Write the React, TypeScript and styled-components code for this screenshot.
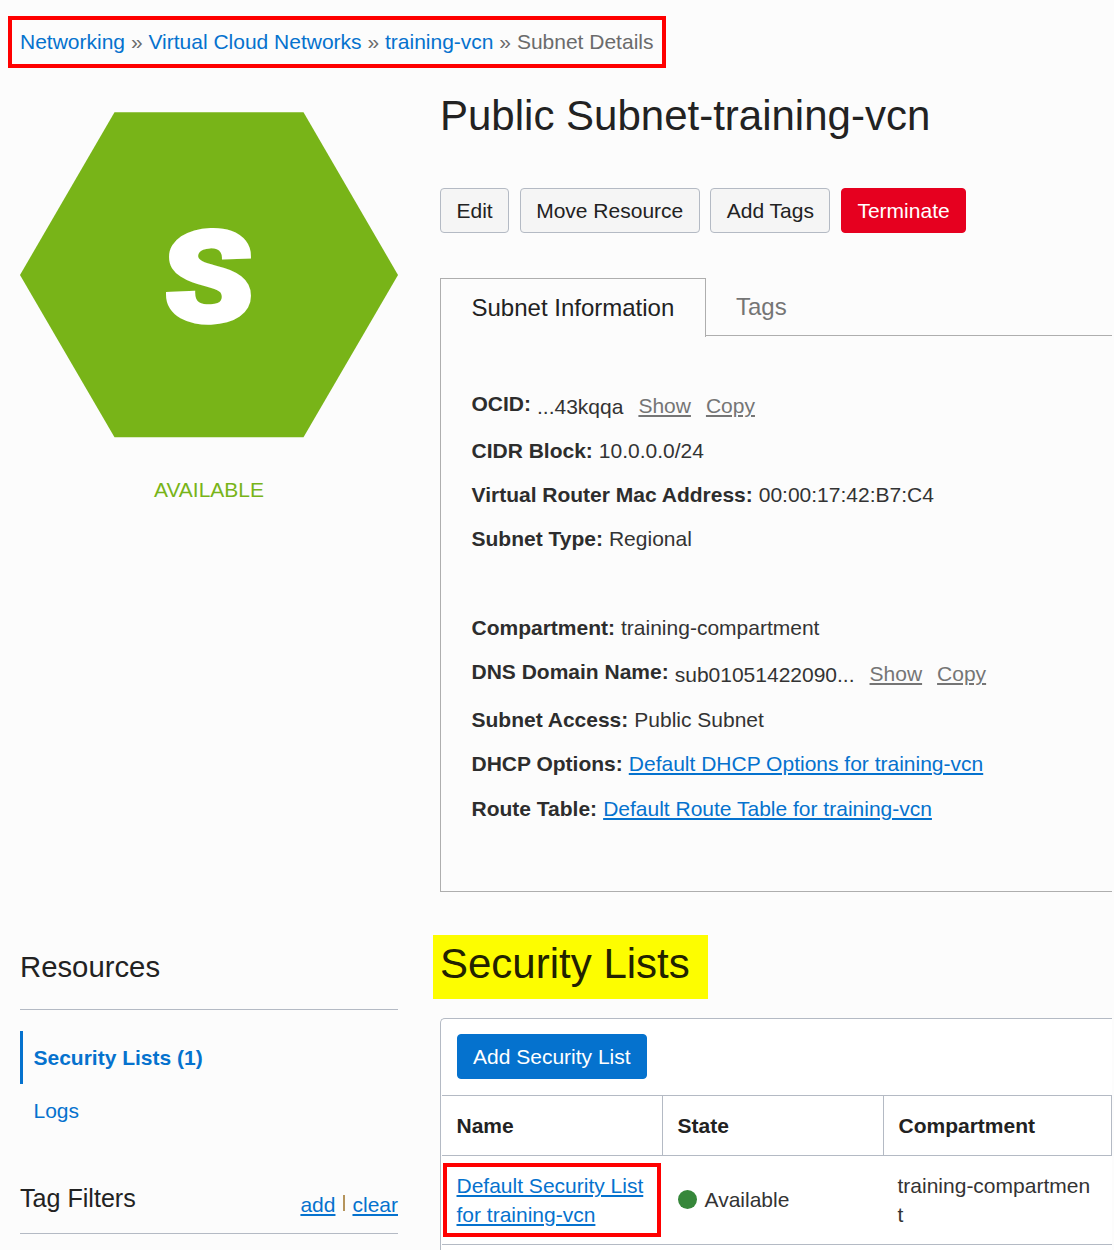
import React from "react";
import styled, { createGlobalStyle, css } from "styled-components";

const blue = "#0572ce";
const red = "#e6001f";
const line = "#b4bac4";
const tabLine = "#aeaeae";

const Global = createGlobalStyle`
  * { box-sizing: border-box; }
  html, body { margin: 0; padding: 0; background: #fcfcfc; }
  body {
    font-family: "Liberation Sans", Arial, Helvetica, sans-serif;
    font-size: 21px;
    line-height: 30px;
    color: #333;
  }
`;

const Page = styled.div`
  width: 1114px;
  height: 1250px;
  overflow: hidden;
  padding: 16px 0 0 8px;
  background: #fcfcfc;
`;

const Breadcrumb = styled.nav`
  display: flex;
  align-items: center;
  width: 658px;
  height: 52px;
  padding-left: 8px;
  border: 4px solid #ff0000;
  white-space: pre;
  color: #6b6b6b;
`;

const Crumb = styled.a`
  color: ${blue};
`;

const Columns = styled.div`
  display: grid;
  grid-template-columns: 378px 674px;
  column-gap: 42px;
  padding-left: 12px;
`;

const Side = styled.aside`
  display: flex;
  flex-direction: column;
  padding-top: 44px;
`;

const Hexagon = styled.svg`
  display: block;
  width: 378px;
  height: 326px;
`;

const Status = styled.div`
  margin-top: 36px;
  height: 32px;
  line-height: 32px;
  text-align: center;
  color: #78b418;
`;

const SideTitle = styled.h2`
  margin: 439px 0 0;
  height: 65px;
  padding-bottom: 22px;
  border-bottom: 1px solid ${line};
  font-size: 29.3px;
  line-height: 44px;
  font-weight: 400;
  color: #222;
`;

const ResourceNav = styled.ul`
  list-style: none;
  margin: 21px 0 0;
  padding: 0;
`;

const ResourceItem = styled.li<{ $active?: boolean }>`
  height: 53px;
  line-height: 53px;
  padding-left: 10.5px;
  border-left: 3px solid ${(p) => (p.$active ? blue : "transparent")};
  font-weight: ${(p) => (p.$active ? 700 : 400)};
  color: ${blue};
`;

const TagFilters = styled.div`
  display: flex;
  justify-content: space-between;
  margin-top: 41px;
  height: 56px;
  border-bottom: 1px solid ${line};
`;

const TagTitle = styled.h3`
  margin: 0;
  font-size: 25.1px;
  line-height: 41px;
  font-weight: 400;
  color: #222;
`;

const TagActions = styled.div`
  display: flex;
  align-items: flex-start;
  padding-top: 12px;
`;

const Divider = styled.i`
  width: 2px;
  height: 16px;
  margin: 5px 7px 0 8px;
  background: #b5945c;
`;

const underlined = css`
  text-decoration: underline;
  text-decoration-thickness: 2px;
  text-underline-offset: 2px;
`;

const Link = styled.a`
  ${underlined}
  color: ${blue};
`;

const GreyLink = styled.a`
  ${underlined}
  padding-top: 2px;
  margin-left: 15px;
  color: #757575;
`;

const Main = styled.main`
  display: flex;
  flex-direction: column;
  padding-top: 20px;
`;

const Title = styled.h1`
  margin: 0;
  height: 56px;
  line-height: 56px;
  font-size: 42px;
  font-weight: 400;
  color: #222;
`;

const ButtonRow = styled.div`
  display: flex;
  gap: 10.5px;
  margin-top: 44px;
`;

type Kind = "danger" | "primary";
const fills: Record<Kind, string> = { danger: red, primary: blue };

const Button = styled.button<{ $kind?: Kind }>`
  height: 45px;
  padding: 0 ${(p) => (p.$kind === "primary" ? "15px" : "15.5px")};
  border: 1px solid ${(p) => (p.$kind ? fills[p.$kind] : line)};
  border-radius: 4px;
  background: ${(p) => (p.$kind ? fills[p.$kind] : "#f5f5f5")};
  color: ${(p) => (p.$kind ? "#fff" : "#222")};
  font: inherit;
  white-space: nowrap;
`;

const Tabs = styled.div`
  display: flex;
  align-items: flex-start;
  width: 672px;
  height: 59px;
  margin-top: 45px;
`;

const ActiveTab = styled.div`
  width: 266px;
  height: 59px;
  padding-left: 30.5px;
  border: 1px solid ${tabLine};
  border-bottom: 0;
  font-size: 24px;
  line-height: 57px;
  color: #222;
`;

const Tab = styled.div`
  flex: 1;
  height: 58px;
  padding-left: 30px;
  border-bottom: 1px solid ${tabLine};
  font-size: 24px;
  line-height: 58px;
  color: #757575;
`;

const InfoPanel = styled.section`
  width: 672px;
  height: 555px;
  padding: 45px 0 0 30.5px;
  border-left: 1px solid ${tabLine};
  border-bottom: 1px solid ${tabLine};
`;

const InfoGroup = styled.div<{ $row: number }>`
  margin-bottom: 45px;
  --row: ${(p) => p.$row}px;
`;

const InfoRow = styled.div<{ $tall?: boolean }>`
  display: flex;
  height: ${(p) => (p.$tall ? "calc(var(--row) + 3.2px)" : "var(--row)")};
  line-height: 44px;
  white-space: nowrap;
`;

const Label = styled.b`
  margin-right: 6px;
  color: #2d2d2d;
`;

const Lowered = styled.span`
  padding-top: 2.6px;
`;

const Highlight = styled.h2`
  width: 275px;
  height: 64px;
  margin: 43px 0 0 -7px;
  padding-left: 7px;
  background: #fdfd00;
  font-size: 42px;
  line-height: 58px;
  font-weight: 400;
  color: #222200;
`;

const TablePanel = styled.section`
  margin-top: 19px;
  height: 240px;
  border: 1px solid ${line};
  border-width: 1px 0 0 1px;
  border-radius: 5px 0 0 0;
  background: #fff;
  width: 672px;
`;

const Toolbar = styled.div`
  height: 76px;
  padding: 15px 0 0 16px;
`;

const Table = styled.div`
  display: grid;
  grid-template-columns: 221px 221px 228px;
  margin-left: 1px;
  border-top: 1px solid ${line};
`;

const HeadCell = styled.div`
  height: 60px;
  padding-left: 14.5px;
  border-right: 1px solid ${line};
  border-bottom: 1px solid ${line};
  line-height: 60px;
  font-weight: 700;
  color: #222;
`;

const Cell = styled.div`
  display: flex;
  align-items: center;
  height: 89px;
  padding: 0 0 1px 14.5px;
  border-bottom: 1px solid ${line};
  line-height: 29px;
`;

const LinkCell = styled(Cell)`
  padding: 0 0 0 1px;
`;

const Marked = styled.div`
  width: 218px;
  height: 74px;
  padding: 4px 0 0 9.5px;
  border: 4px solid #ff0000;
`;

const BreakText = styled.span`
  width: 196px;
  margin-left: -1px;
  word-break: break-all;
`;

const Dot = styled.i`
  width: 19px;
  height: 19px;
  margin-right: 8px;
  border-radius: 50%;
  background: #36873a;
`;

export default function App() {
  return (
    <Page>
      <Global />
      <Breadcrumb>
        <Crumb>Networking</Crumb>
        {" » "}
        <Crumb>Virtual Cloud Networks</Crumb>
        {" » "}
        <Crumb>training-vcn</Crumb>
        {" » Subnet Details"}
      </Breadcrumb>
      <Columns>
        <Side>
          <Hexagon viewBox="0 0 378 326">
            <polygon points="0,163 94.5,0.3 283.5,0.3 378,163 283.5,325.3 94.5,325.3" fill="#78b418" />
            <text
              transform="translate(188.6 209.4) skewY(-2.2) scale(1.13 1)"
              textAnchor="middle"
              fontFamily="Roboto, sans-serif"
              fontWeight="900"
              fontSize="127"
              fill="#fff"
              stroke="#fff"
              strokeWidth="4"
            >
              S
            </text>
          </Hexagon>
          <Status>AVAILABLE</Status>
          <SideTitle>Resources</SideTitle>
          <ResourceNav>
            <ResourceItem $active>Security Lists (1)</ResourceItem>
            <ResourceItem>Logs</ResourceItem>
          </ResourceNav>
          <TagFilters>
            <TagTitle>Tag Filters</TagTitle>
            <TagActions>
              <Link>add</Link>
              <Divider />
              <Link>clear</Link>
            </TagActions>
          </TagFilters>
        </Side>
        <Main>
          <Title>Public Subnet-training-vcn</Title>
          <ButtonRow>
            <Button>Edit</Button>
            <Button>Move Resource</Button>
            <Button>Add Tags</Button>
            <Button $kind="danger">Terminate</Button>
          </ButtonRow>
          <Tabs>
            <ActiveTab>Subnet Information</ActiveTab>
            <Tab>Tags</Tab>
          </Tabs>
          <InfoPanel>
            <InfoGroup $row={44}>
              <InfoRow $tall>
                <Label>OCID:</Label>
                <Lowered>...43kqqa</Lowered>
                <GreyLink>Show</GreyLink>
                <GreyLink>Copy</GreyLink>
              </InfoRow>
              <InfoRow>
                <Label>CIDR Block:</Label>10.0.0.0/24
              </InfoRow>
              <InfoRow>
                <Label>Virtual Router Mac Address:</Label>00:00:17:42:B7:C4
              </InfoRow>
              <InfoRow>
                <Label>Subnet Type:</Label>Regional
              </InfoRow>
            </InfoGroup>
            <InfoGroup $row={44.3}>
              <InfoRow>
                <Label>Compartment:</Label>training-compartment
              </InfoRow>
              <InfoRow $tall>
                <Label>DNS Domain Name:</Label>
                <Lowered>sub01051422090...</Lowered>
                <GreyLink>Show</GreyLink>
                <GreyLink>Copy</GreyLink>
              </InfoRow>
              <InfoRow>
                <Label>Subnet Access:</Label>Public Subnet
              </InfoRow>
              <InfoRow>
                <Label>DHCP Options:</Label>
                <Link>Default DHCP Options for training-vcn</Link>
              </InfoRow>
              <InfoRow>
                <Label>Route Table:</Label>
                <Link>Default Route Table for training-vcn</Link>
              </InfoRow>
            </InfoGroup>
          </InfoPanel>
          <Highlight>Security Lists</Highlight>
          <TablePanel>
            <Toolbar>
              <Button $kind="primary">Add Security List</Button>
            </Toolbar>
            <Table>
              <HeadCell>Name</HeadCell>
              <HeadCell>State</HeadCell>
              <HeadCell>Compartment</HeadCell>
              <LinkCell>
                <Marked>
                  <Link>
                    Default Security List
                    <br />
                    for training-vcn
                  </Link>
                </Marked>
              </LinkCell>
              <Cell>
                <Dot />
                Available
              </Cell>
              <Cell>
                <BreakText>training-compartment</BreakText>
              </Cell>
            </Table>
          </TablePanel>
        </Main>
      </Columns>
    </Page>
  );
}
